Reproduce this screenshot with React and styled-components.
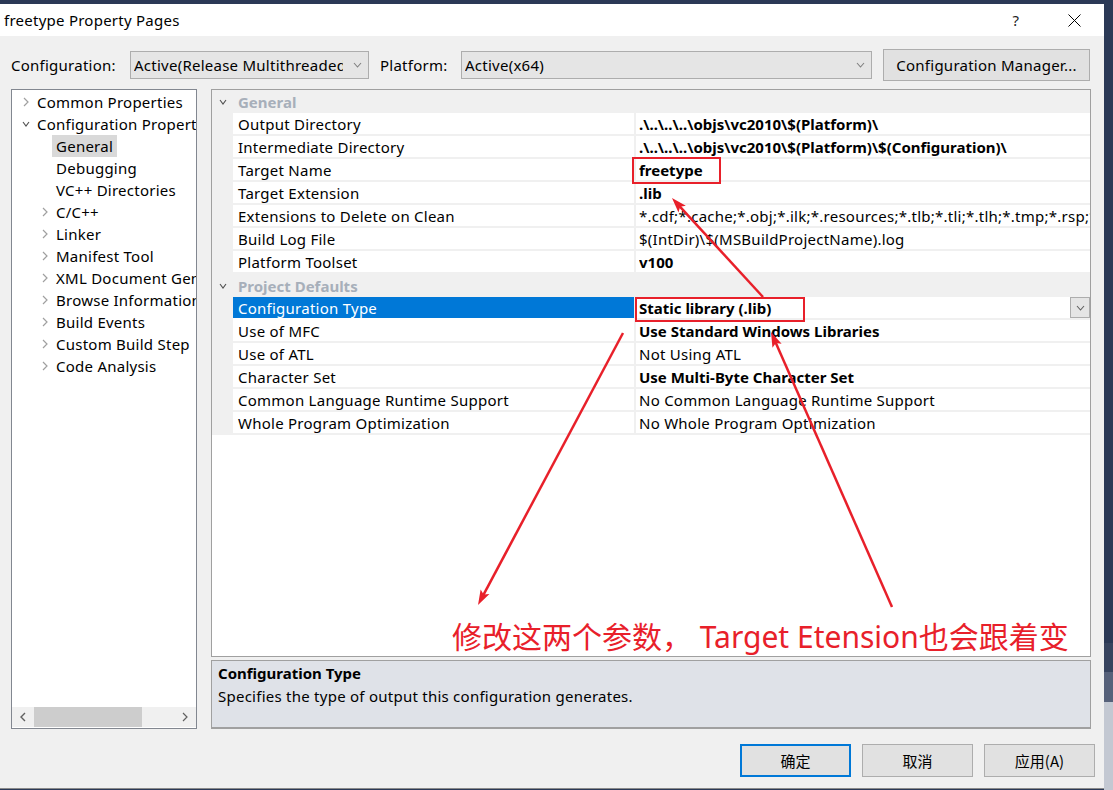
import React from 'react';
import styled, { createGlobalStyle } from 'styled-components';

const GlobalStyle = createGlobalStyle`
  html, body {
    margin: 0;
    padding: 0;
  }
  body {
    width: 1113px;
    height: 790px;
    overflow: hidden;
    background: #2b3956;
    font-family: "Noto Sans", "Noto Sans CJK SC", sans-serif;
    color: #000;
  }
`;

const RED = '#e8202a';

const treeItems = [
  { label: 'Common Properties', level: 0, arrow: 'right' },
  { label: 'Configuration Properties', level: 0, arrow: 'down' },
  { label: 'General', level: 1, selected: true },
  { label: 'Debugging', level: 1 },
  { label: 'VC++ Directories', level: 1 },
  { label: 'C/C++', level: 1, arrow: 'right' },
  { label: 'Linker', level: 1, arrow: 'right' },
  { label: 'Manifest Tool', level: 1, arrow: 'right' },
  { label: 'XML Document Generator', level: 1, arrow: 'right' },
  { label: 'Browse Information', level: 1, arrow: 'right' },
  { label: 'Build Events', level: 1, arrow: 'right' },
  { label: 'Custom Build Step', level: 1, arrow: 'right' },
  { label: 'Code Analysis', level: 1, arrow: 'right' },
];

const sections = [
  {
    title: 'General',
    rows: [
      { name: 'Output Directory', value: '.\\..\\..\\..\\objs\\vc2010\\$(Platform)\\', bold: true },
      { name: 'Intermediate Directory', value: '.\\..\\..\\..\\objs\\vc2010\\$(Platform)\\$(Configuration)\\', bold: true },
      { name: 'Target Name', value: 'freetype', bold: true },
      { name: 'Target Extension', value: '.lib', bold: true },
      { name: 'Extensions to Delete on Clean', value: '*.cdf;*.cache;*.obj;*.ilk;*.resources;*.tlb;*.tli;*.tlh;*.tmp;*.rsp;*.pgc;*.pgd;*.meta;*.tlog;*.manifest' },
      { name: 'Build Log File', value: '$(IntDir)\\$(MSBuildProjectName).log' },
      { name: 'Platform Toolset', value: 'v100', bold: true },
    ],
  },
  {
    title: 'Project Defaults',
    rows: [
      { name: 'Configuration Type', value: 'Static library (.lib)', bold: true, selected: true },
      { name: 'Use of MFC', value: 'Use Standard Windows Libraries', bold: true },
      { name: 'Use of ATL', value: 'Not Using ATL' },
      { name: 'Character Set', value: 'Use Multi-Byte Character Set', bold: true },
      { name: 'Common Language Runtime Support', value: 'No Common Language Runtime Support' },
      { name: 'Whole Program Optimization', value: 'No Whole Program Optimization' },
    ],
  },
];

const arrows = [
  { from: [763, 297], to: [672, 198] },
  { from: [623, 333], to: [478, 605] },
  { from: [892, 607], to: [771, 332] },
];

const ChevronRight = ({ color = '#a0a0a0' }) => (
  <svg width="6" height="10" viewBox="0 0 6 10">
    <path d="M1 1 L5 5 L1 9" fill="none" stroke={color} strokeWidth="1.2" />
  </svg>
);

const ChevronLeft = ({ color = '#606060' }) => (
  <svg width="6" height="10" viewBox="0 0 6 10">
    <path d="M5 1 L1 5 L5 9" fill="none" stroke={color} strokeWidth="1.4" />
  </svg>
);

const ChevronDown = ({ color = '#404040', w = 9 }) => (
  <svg width={w} height="6" viewBox={`0 0 ${w} 6`}>
    <path d={`M1 1 L${w / 2} 5 L${w - 1} 1`} fill="none" stroke={color} strokeWidth="1.1" />
  </svg>
);

const Arrow = ({ from, to }) => {
  const dx = to[0] - from[0];
  const dy = to[1] - from[1];
  const len = Math.hypot(dx, dy);
  const ux = dx / len;
  const uy = dy / len;
  const hl = 15;
  const hw = 5;
  const bx = to[0] - ux * hl;
  const by = to[1] - uy * hl;
  const pts = [
    `${to[0]},${to[1]}`,
    `${bx - uy * hw},${by + ux * hw}`,
    `${bx + ux * 3},${by + uy * 3}`,
    `${bx + uy * hw},${by - ux * hw}`,
  ].join(' ');
  return (
    <g>
      <line x1={from[0]} y1={from[1]} x2={bx + ux * 4} y2={by + uy * 4} stroke={RED} strokeWidth="2.5" />
      <polygon points={pts} fill={RED} />
    </g>
  );
};

const App = () => {
  return (
    <Screen>
      <GlobalStyle />
      <Window>
        <TitleBar>
          <Title>freetype Property Pages</Title>
          <TitleButtons>
            <TitleButton>?</TitleButton>
            <TitleButton>
              <svg width="13" height="13" viewBox="0 0 13 13">
                <path d="M0.5 0.5 L12.5 12.5 M12.5 0.5 L0.5 12.5" stroke="#000" strokeWidth="1" />
              </svg>
            </TitleButton>
          </TitleButtons>
        </TitleBar>

        <Toolbar>
          <FieldLabel width={119}>Configuration:</FieldLabel>
          <Select width={239}>
            <SelectText>Active(Release Multithreaded)</SelectText>
            <ChevronDown color="#808080" />
          </Select>
          <FieldLabel width={81} gap={11}>Platform:</FieldLabel>
          <Select width={411}>
            <SelectText>Active(x64)</SelectText>
            <ChevronDown color="#808080" />
          </Select>
          <ManagerButton>Configuration Manager...</ManagerButton>
        </Toolbar>

        <Main>
          <Tree>
            <TreeList>
              {treeItems.map((item) => (
                <TreeItem key={item.label} level={item.level}>
                  <TreeToggle>
                    {item.arrow === 'right' && <ChevronRight />}
                    {item.arrow === 'down' && <ChevronDown color="#505050" w={8} />}
                  </TreeToggle>
                  <TreeLabel selected={item.selected}>{item.label}</TreeLabel>
                </TreeItem>
              ))}
            </TreeList>
            <HScroll>
              <ScrollArrow><ChevronLeft /></ScrollArrow>
              <ScrollTrack>
                <ScrollThumb />
              </ScrollTrack>
              <ScrollArrow><ChevronRight color="#606060" /></ScrollArrow>
            </HScroll>
          </Tree>

          <RightColumn>
            <Grid>
              {sections.map((section) => (
                <React.Fragment key={section.title}>
                  <CategoryRow>
                    <Margin><ChevronDown color="#505050" w={8} /></Margin>
                    <CategoryTitle>{section.title}</CategoryTitle>
                  </CategoryRow>
                  {section.rows.map((row) => (
                    <PropRow key={row.name}>
                      <Margin />
                      <NameCell selected={row.selected}>{row.name}</NameCell>
                      <ValueCell bold={row.bold}>
                        <ValueText>{row.value}</ValueText>
                        {row.selected && (
                          <DropButton>
                            <ChevronDown color="#606060" />
                          </DropButton>
                        )}
                      </ValueCell>
                    </PropRow>
                  ))}
                </React.Fragment>
              ))}
            </Grid>
            <Description>
              <DescTitle>Configuration Type</DescTitle>
              <DescText>Specifies the type of output this configuration generates.</DescText>
            </Description>
          </RightColumn>
        </Main>

        <Footer>
          <DialogButton primary>确定</DialogButton>
          <DialogButton>取消</DialogButton>
          <DialogButton>应用(A)</DialogButton>
        </Footer>
      </Window>
      <Desktop />

      <Overlay width="1113" height="790" viewBox="0 0 1113 790">
        <rect x="633" y="158" width="87" height="25" fill="none" stroke={RED} strokeWidth="2" />
        <rect x="636" y="298" width="168" height="23" fill="none" stroke={RED} strokeWidth="2" />
        {arrows.map((a, i) => (
          <Arrow key={i} from={a.from} to={a.to} />
        ))}
      </Overlay>
      <Note>修改这两个参数， Target Etension也会跟着变</Note>
    </Screen>
  );
};

export default App;

const Screen = styled.div`
  position: relative;
  width: 1113px;
  height: 790px;
  display: flex;
  background: #2b3956;
`;

const Window = styled.div`
  width: 1104px;
  height: 784px;
  margin-top: 4px;
  background: #f0f0f0;
  border-bottom: 1px solid #8a8a8a;
  display: flex;
  flex-direction: column;
  font-size: 15px;
  letter-spacing: 0.25px;
`;

const Desktop = styled.div`
  flex: 1;
  background: linear-gradient(
    to bottom,
    #2b3956 0,
    #2b3956 643px,
    #37445f 643px,
    #37445f 672px,
    #56617a 672px,
    #56617a 702px,
    #c3c8d2 702px
  );
`;

const TitleBar = styled.div`
  height: 32px;
  background: #fff;
  display: flex;
  align-items: center;
  padding-left: 4px;
`;

const Title = styled.span`
  font-size: 15px;
`;

const TitleButtons = styled.div`
  margin-left: auto;
  display: flex;
  gap: 12px;
  padding-right: 7px;
`;

const TitleButton = styled.div`
  width: 46px;
  height: 32px;
  display: flex;
  align-items: center;
  justify-content: center;
  font-size: 15px;
  color: #222;
`;

const Toolbar = styled.div`
  display: flex;
  align-items: center;
  height: 32px;
  padding: 13px 0 0 11px;
`;

const FieldLabel = styled.span`
  width: ${(p) => p.width}px;
  margin-left: ${(p) => p.gap || 0}px;
  white-space: nowrap;
`;

const Select = styled.div`
  width: ${(p) => p.width}px;
  height: 28px;
  box-sizing: border-box;
  border: 1px solid #adadad;
  background: #e5e5e5;
  display: flex;
  align-items: center;
  padding: 0 6px 0 3px;
`;

const SelectText = styled.span`
  flex: 1;
  overflow: hidden;
  white-space: nowrap;
  margin-right: 10px;
`;

const ManagerButton = styled.div`
  width: 207px;
  height: 32px;
  margin-left: 11px;
  box-sizing: border-box;
  border: 1px solid #adadad;
  background: #e1e1e1;
  display: flex;
  align-items: center;
  justify-content: center;
  white-space: nowrap;
`;

const Main = styled.div`
  display: flex;
  gap: 14px;
  padding: 8px 0 0 11px;
`;

const Tree = styled.div`
  width: 186px;
  height: 640px;
  box-sizing: border-box;
  border: 1px solid #828790;
  background: #fff;
  display: flex;
  flex-direction: column;
  overflow: hidden;
`;

const TreeList = styled.div`
  flex: 1;
  padding-top: 1px;
`;

const TreeItem = styled.div`
  height: 22px;
  display: flex;
  align-items: center;
  padding-left: ${(p) => (p.level ? 25 : 6)}px;
  white-space: nowrap;
`;

const TreeToggle = styled.span`
  width: 15px;
  flex-shrink: 0;
  display: flex;
  align-items: center;
  justify-content: center;
`;

const TreeLabel = styled.span`
  padding: 0 4px;
  line-height: 22px;
  background: ${(p) => (p.selected ? '#d9d9d9' : 'transparent')};
`;

const HScroll = styled.div`
  height: 20px;
  margin-bottom: 1px;
  display: flex;
  background: #f0f0f0;
`;

const ScrollArrow = styled.div`
  width: 22px;
  display: flex;
  align-items: center;
  justify-content: center;
`;

const ScrollTrack = styled.div`
  flex: 1;
  display: flex;
`;

const ScrollThumb = styled.div`
  width: 108px;
  background: #cdcdcd;
`;

const RightColumn = styled.div`
  width: 880px;
  display: flex;
  flex-direction: column;
  gap: 3px;
`;

const Grid = styled.div`
  height: 568px;
  box-sizing: border-box;
  border: 1px solid #a0a0a0;
  background: #fff;
  overflow: hidden;
`;

const CategoryRow = styled.div`
  height: 23px;
  display: flex;
  align-items: center;
  background: #f0f0f0;
`;

const Margin = styled.div`
  width: 21px;
  align-self: stretch;
  flex-shrink: 0;
  display: flex;
  align-items: center;
  justify-content: center;
  background: #f0f0f0;
`;

const CategoryTitle = styled.span`
  padding-left: 5px;
  font-weight: 700;
  letter-spacing: 0;
  color: #a7afba;
`;

const PropRow = styled.div`
  height: 23px;
  display: flex;
`;

const NameCell = styled.div`
  width: 403px;
  box-sizing: border-box;
  flex-shrink: 0;
  padding: 1px 0 0 5px;
  display: flex;
  align-items: center;
  white-space: nowrap;
  overflow: hidden;
  border-bottom: 2px solid ${(p) => (p.selected ? '#fff' : '#f0f0f0')};
  border-right: 2px solid #f0f0f0;
  background: ${(p) => (p.selected ? '#0078d7' : '#fff')};
  color: ${(p) => (p.selected ? '#fff' : '#000')};
`;

const ValueCell = styled.div`
  flex: 1;
  min-width: 0;
  display: flex;
  align-items: center;
  padding: 1px 0 0 3px;
  border-bottom: 2px solid #f0f0f0;
  font-weight: ${(p) => (p.bold ? 700 : 400)};
  letter-spacing: ${(p) => (p.bold ? '0' : '0.25px')};
  white-space: nowrap;
  overflow: hidden;
`;

const ValueText = styled.span`
  flex: 1;
  overflow: hidden;
`;

const DropButton = styled.div`
  width: 20px;
  height: 21px;
  margin-top: -1px;
  box-sizing: border-box;
  border: 1px solid #adadad;
  background: #e5e5e5;
  display: flex;
  align-items: center;
  justify-content: center;
  align-self: flex-start;
`;

const Description = styled.div`
  height: 69px;
  box-sizing: border-box;
  border: 1px solid #a0a0a0;
  border-bottom-width: 2px;
  background: #dfe2e8;
  padding: 1px 6px 0;
`;

const DescTitle = styled.div`
  font-weight: 700;
  letter-spacing: 0;
  line-height: 22px;
`;

const DescText = styled.div`
  line-height: 24px;
`;

const Footer = styled.div`
  display: flex;
  justify-content: flex-end;
  gap: 11px;
  padding: 15px 9px 0 0;
`;

const DialogButton = styled.div`
  width: 111px;
  height: 33px;
  box-sizing: border-box;
  border: ${(p) => (p.primary ? '2px solid #0078d7' : '1px solid #adadad')};
  background: #e1e1e1;
  display: flex;
  align-items: center;
  justify-content: center;
  font-family: "Noto Sans CJK SC", "Noto Sans", sans-serif;
  font-size: 15px;
  letter-spacing: 0;
`;

const Overlay = styled.svg`
  position: absolute;
  left: 0;
  top: 0;
  pointer-events: none;
`;

const Note = styled.div`
  position: absolute;
  left: 452px;
  top: 619px;
  font-family: "Noto Sans", "Noto Sans CJK SC", sans-serif;
  font-size: 30px;
  line-height: 36px;
  color: ${RED};
  white-space: nowrap;
`;
